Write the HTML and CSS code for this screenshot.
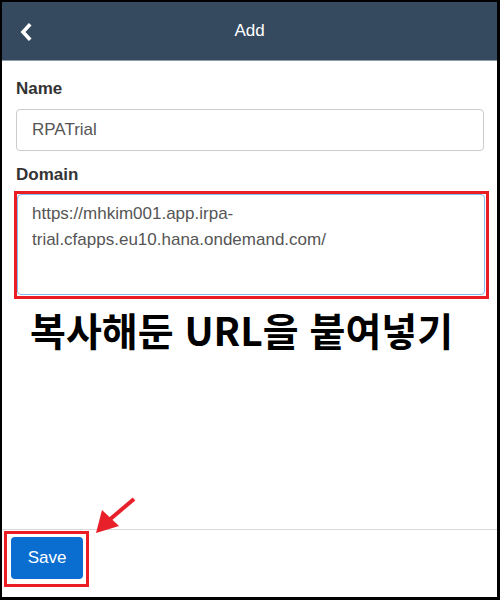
FILE: index.html
```html
<!DOCTYPE html>
<html lang="ko">
<head>
<meta charset="utf-8">
<title>Add</title>
<link rel="stylesheet" href="styles.css">
</head>
<body>
<div class="frame">
  <header class="bar">
    <span class="back">
      <svg width="14" height="18" viewBox="0 0 14 18"><polyline points="10,2.5 4,9 10,15.5" fill="none" stroke="#fff" stroke-width="3.6" stroke-linecap="square" stroke-linejoin="miter"/></svg>
    </span>
    <span class="title">Add</span>
  </header>
  <main class="content">
    <label class="label">Name</label>
    <input class="input" type="text" value="RPATrial">
    <label class="label label-domain">Domain</label>
    <div class="highlight">
      <textarea class="textarea">https://mhkim001.app.irpa-trial.cfapps.eu10.hana.ondemand.com/</textarea>
    </div>
    <p class="note">복사해둔 URL을 붙여넣기</p>
  </main>
  <footer class="footer">
    <div class="highlight-btn">
      <button class="btn">Save</button>
    </div>
  </footer>
  <svg class="arrow" width="500" height="600" viewBox="0 0 500 600">
    <line x1="134" y1="499" x2="108" y2="521" stroke="#e8202a" stroke-width="4"/>
    <polygon points="96,533 102,510 119,526" fill="#e8202a"/>
  </svg>
</div>
</body>
</html>
```
FILE: styles.css
```css
* { box-sizing: border-box; }
html, body { margin: 0; padding: 0; background: #000; }
body { font-family: "Liberation Sans", Arial, sans-serif; }
.frame {
  position: relative;
  width: 500px;
  height: 600px;
  border: 2px solid #000;
  border-right-width: 3px;
  border-bottom-width: 3px;
  background: #fff;
  display: flex;
  flex-direction: column;
}
.bar {
  height: 59px;
  background: #354a5f;
  border-bottom: 1px solid #8e9cab;
  display: flex;
  align-items: center;
  justify-content: center;
  position: relative;
  flex: none;
}
.back {
  position: absolute;
  left: 17px;
  top: 21px;
  display: flex;
}
.title { color: #fff; font-size: 17px; }
.content {
  flex: 1;
  padding: 18px 13px 0 14px;
  display: flex;
  flex-direction: column;
}
.label {
  font-size: 17px;
  font-weight: bold;
  color: #333;
  line-height: 19px;
}
.input {
  margin-top: 11px;
  height: 42px;
  border: 1px solid #ccc;
  border-radius: 4px;
  padding: 0 15px;
  font: 17px "Liberation Sans", Arial, sans-serif;
  color: #555;
  outline: none;
}
.label-domain { margin-top: 14px; }
.highlight {
  margin: 7px -5px 0 -2px;
  border: 3px solid #ec1c24;
  padding: 0 1px 1px 0;
  display: flex;
}
.textarea {
  flex: 1;
  height: 101px;
  border: 1px solid #82bbec;
  border-radius: 4px;
  padding: 6px 30px 0 14px;
  font: 17px/26px "Liberation Sans", Arial, sans-serif;
  color: #555;
  resize: none;
  outline: none;
  overflow: hidden;
}
.note {
  margin: 5px 0 0 14px;
  font-family: "Noto Sans CJK KR", "Noto Sans", sans-serif;
  font-weight: bold;
  font-size: 39px;
  line-height: 50px;
  color: #000;
}
.footer {
  flex: none;
  height: 68px;
  border-top: 1px solid #d9d9d9;
  padding: 1px 0 0 2px;
}
.highlight-btn {
  display: inline-flex;
  border: 3px solid #ec1c24;
  padding: 3px 3px 5px 4px;
}
.btn {
  width: 72px;
  height: 42px;
  border: none;
  border-radius: 4px;
  background: #0a6ed1;
  color: #fff;
  font: 17px "Liberation Sans", Arial, sans-serif;
  padding: 0;
}
.arrow {
  position: absolute;
  left: -2px;
  top: -2px;
  pointer-events: none;
}
```
